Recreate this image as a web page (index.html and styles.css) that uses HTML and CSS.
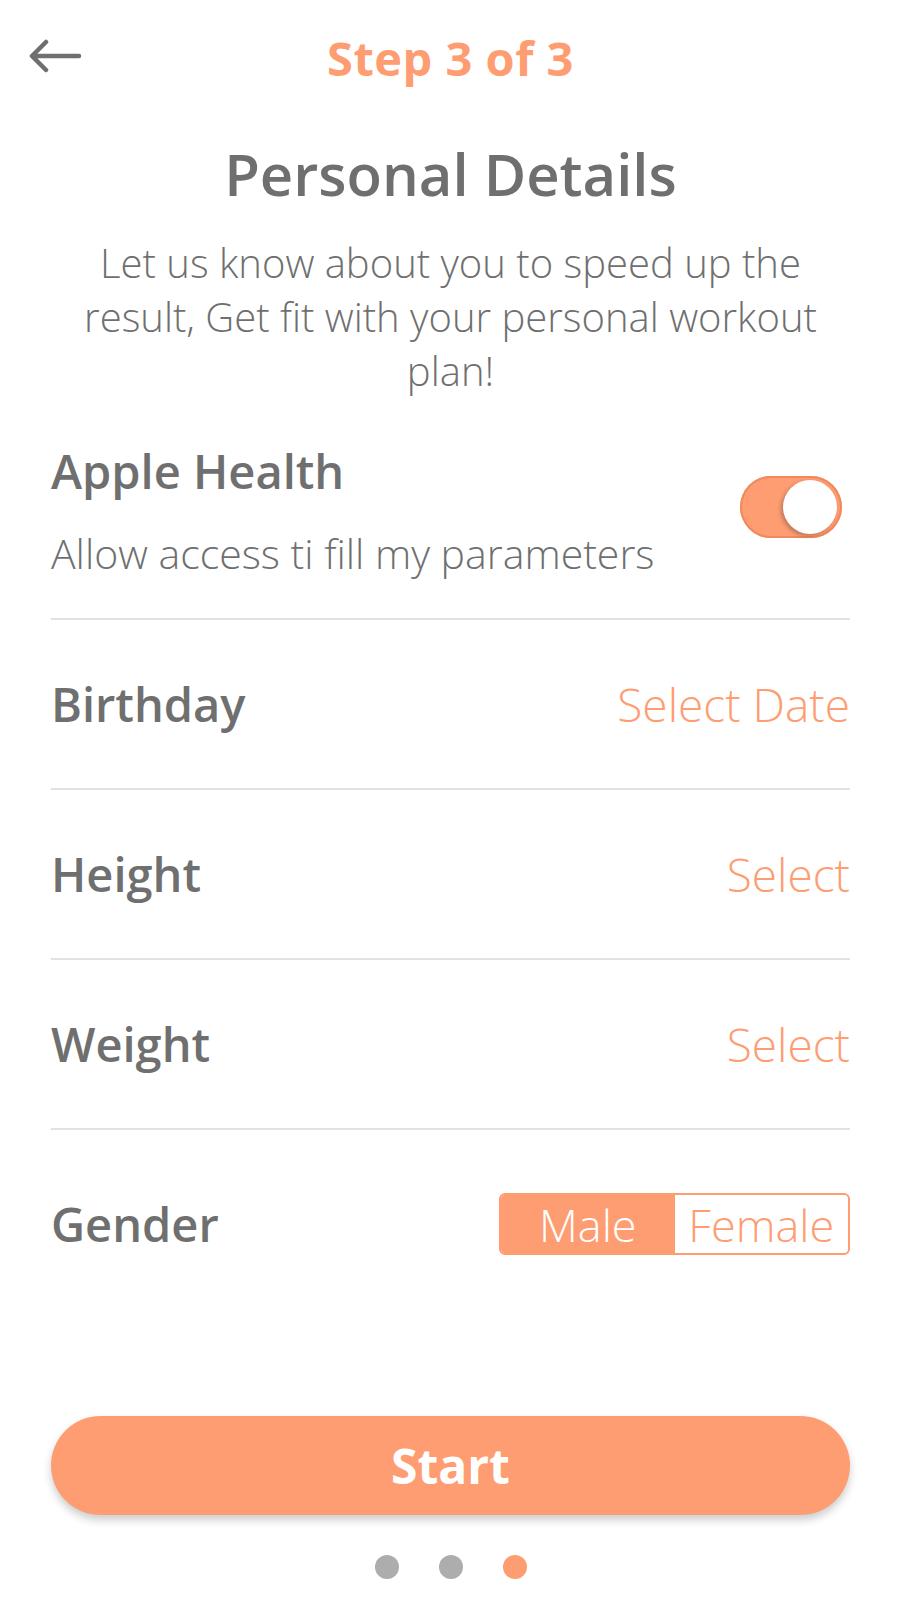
FILE: index.html
```html
<!DOCTYPE html>
<html>
<head>
<meta charset="utf-8">
<link rel="stylesheet" href="styles.css">
</head>
<body>
<div class="screen">
  <header class="topbar">
    <button class="back" aria-label="Back">
      <svg width="54" height="34" viewBox="0 0 54 34"><path d="M3 17 H50 M3 17 L17 3 M3 17 L17 31" fill="none" stroke="#6f6f6f" stroke-width="4.5" stroke-linecap="round" stroke-linejoin="round"/></svg>
    </button>
    <div class="step">Step 3 of 3</div>
  </header>
  <h1 class="title">Personal Details</h1>
  <p class="subtitle">Let us know about you to speed up the result, Get fit with your personal workout plan!</p>

  <div class="health">
    <div class="health-text">
      <div class="label">Apple Health</div>
      <div class="health-desc">Allow access ti fill my parameters</div>
    </div>
    <div class="toggle"><div class="knob"></div></div>
  </div>

  <div class="row"><span class="label">Birthday</span><span class="value">Select Date</span></div>
  <div class="row"><span class="label">Height</span><span class="value">Select</span></div>
  <div class="row"><span class="label">Weight</span><span class="value">Select</span></div>
  <div class="row gender"><span class="label">Gender</span>
    <div class="segment"><span class="seg active">Male</span><span class="seg">Female</span></div>
  </div>

  <button class="start">Start</button>
  <div class="dots"><span class="dot"></span><span class="dot"></span><span class="dot on"></span></div>
</div>
</body>
</html>
```
FILE: styles.css
```css
* { box-sizing: border-box; }
html, body { margin: 0; padding: 0; background: #fff; }
body { font-family: "Open Sans", "Noto Sans", sans-serif; color: #6f6f6f; }
.screen { width: 900px; height: 1600px; display: flex; flex-direction: column; padding: 0 50px 21px 51px; }
.topbar { height: 116px; display: flex; align-items: center; justify-content: center; position: relative; }
.back { position: absolute; left: -22px; top: 39px; background: none; border: 0; padding: 0; width: 54px; height: 34px; }
.step { color: #fe9d72; font-size: 47px; font-weight: 700; letter-spacing: 0.5px; }
.title { margin: 28px 0 0; text-align: center; font-size: 58px; line-height: 60px; font-weight: 600; color: #6f6f6f; }
.subtitle { margin: 32px auto 0; width: 760px; text-align: center; font-size: 40px; line-height: 54px; font-weight: 300; color: #6f6f6f; }
.health { margin-top: 48px; display: flex; align-items: center; justify-content: space-between; border-bottom: 2px solid #e2e2e2; padding-bottom: 43px; }
.label { font-size: 47px; font-weight: 600; color: #6f6f6f; line-height: 50px; }
.health-desc { margin-top: 35px; font-size: 41px; line-height: 44px; font-weight: 300; }
.toggle { width: 102px; height: 62px; border-radius: 31px; background: #fe9d72; position: relative; margin-right: 8px; margin-top: -8px; box-shadow: inset 0 0 0 2px #f08a5c; flex: none; }
.knob { position: absolute; right: 5px; top: 4px; width: 54px; height: 54px; border-radius: 50%; background: #fff; box-shadow: -2px 2px 4px rgba(0,0,0,0.25); }
.row { height: 170px; display: flex; align-items: center; justify-content: space-between; border-bottom: 2px solid #e2e2e2; }
.value { color: #fe9d72; font-size: 46px; font-weight: 300; }
.row.gender { border-bottom: 0; height: 188px; }
.segment { display: flex; width: 351px; height: 62px; border: 2px solid #fe9d72; border-radius: 6px; overflow: hidden; }
.seg { flex: 1; display: flex; align-items: center; justify-content: center; color: #fe9d72; font-size: 45px; font-weight: 300; }
.seg.active { background: #fe9d72; color: #fff; }
.start { margin-top: auto; height: 99px; width: 100%; border: 0; border-radius: 50px; background: #fe9d72; color: #fff; font-family: inherit; font-size: 48px; font-weight: 700; box-shadow: 0 5px 8px rgba(0,0,0,0.2); }
.dots { margin-top: 40px; display: flex; justify-content: center; gap: 40px; }
.dot { width: 24px; height: 24px; border-radius: 50%; background: #adadad; }
.dot.on { background: #fe9d72; }
```
